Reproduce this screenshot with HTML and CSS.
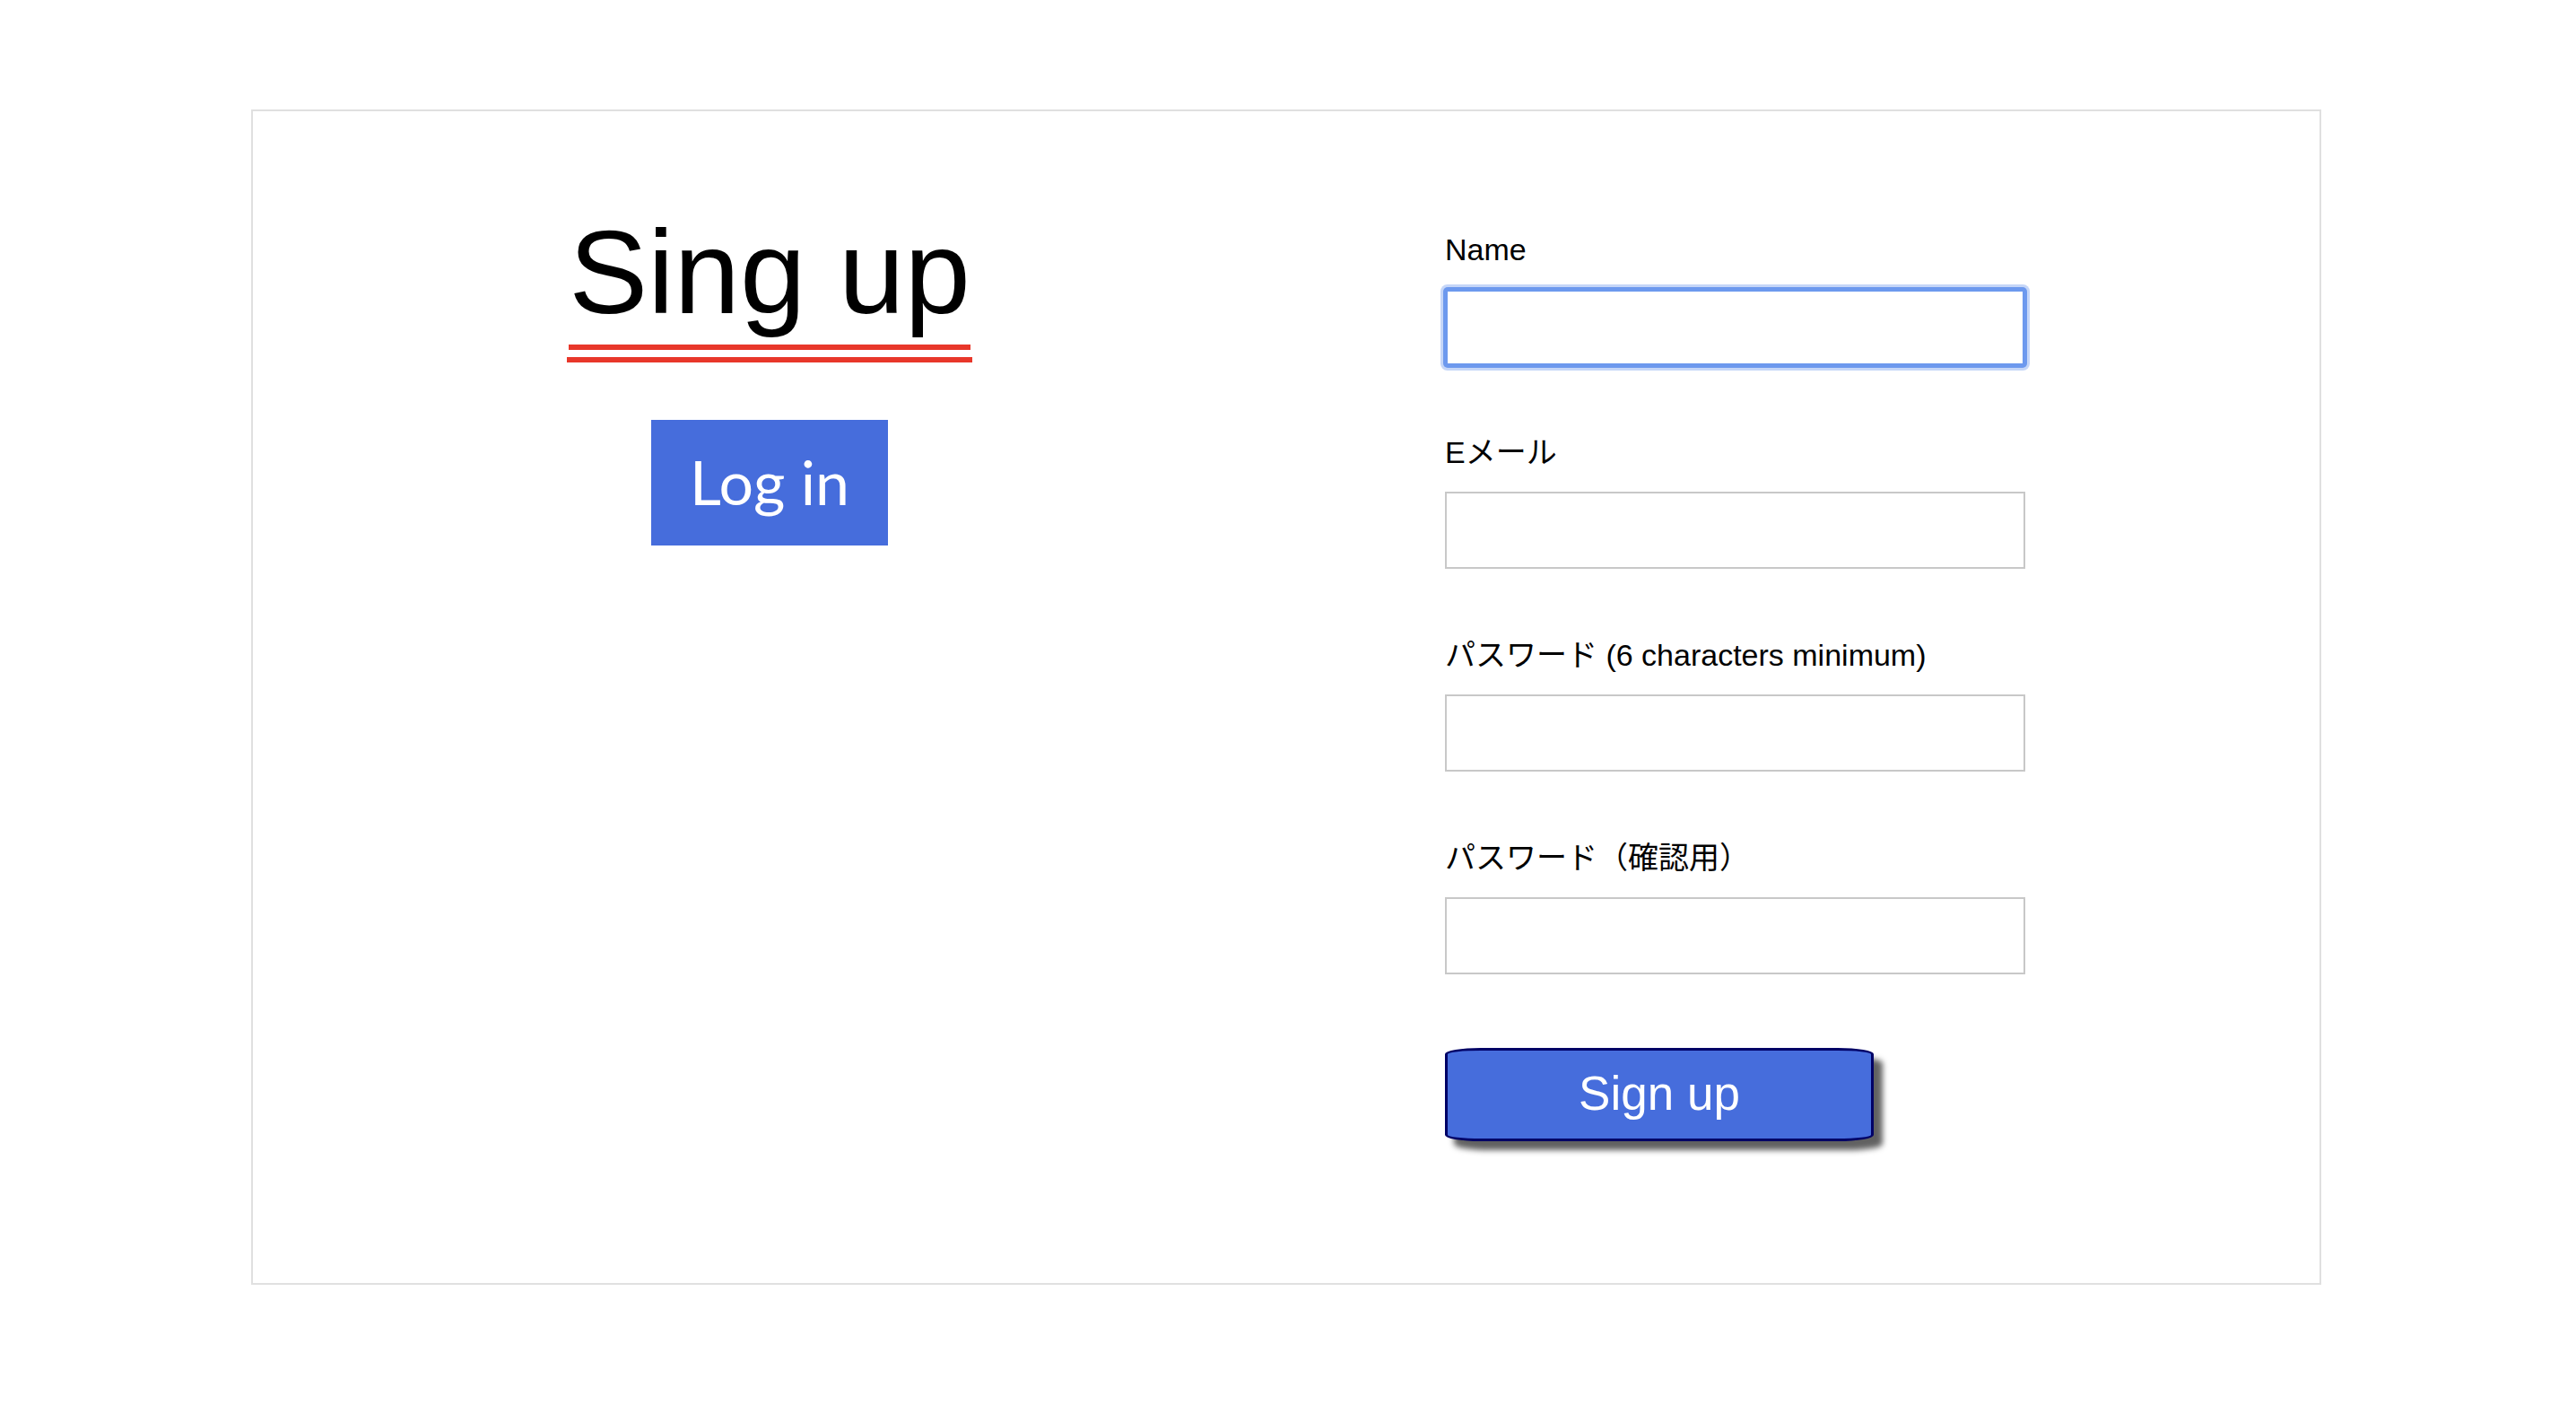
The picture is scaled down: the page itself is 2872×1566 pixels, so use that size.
FILE: index.html
```html
<!DOCTYPE html>
<html lang="ja">
<head>
<meta charset="utf-8">
<title>Sign up</title>
<link rel="stylesheet" href="styles.css">
</head>
<body>
<div class="card">
  <div class="left">
    <h1 class="title">Sing up</h1>
    <a class="login-btn" href="#">Log in</a>
  </div>
  <div class="right">
    <form class="form">
      <div class="field">
        <label class="label" for="name">Name</label>
        <input class="input input-focus" id="name" type="text">
      </div>
      <div class="field">
        <label class="label" for="email">Eメール</label>
        <input class="input" id="email" type="email">
      </div>
      <div class="field">
        <label class="label" for="pw">パスワード (6 characters minimum)</label>
        <input class="input" id="pw" type="password">
      </div>
      <div class="field">
        <label class="label" for="pw2">パスワード（確認用）</label>
        <input class="input" id="pw2" type="password">
      </div>
      <button class="signup-btn" type="button">Sign up</button>
    </form>
  </div>
</div>
</body>
</html>
```
FILE: styles.css
```css
html, body {
  margin: 0;
  padding: 0;
  background: #ffffff;
}

body {
  font-family: "Liberation Sans", "Noto Sans CJK JP", sans-serif;
  color: #000;
}

.card {
  box-sizing: border-box;
  width: 2308px;
  height: 1310px;
  margin: 122px 0 0 280px;
  border: 2px solid #e0e0e0;
  display: flex;
}

.left {
  width: 1152px;
  flex: none;
  display: flex;
  flex-direction: column;
  align-items: center;
  padding-top: 105px;
}

.title {
  display: flex;
  flex-direction: column;
  margin: 0;
  padding: 0 2px 8px;
  font-family: "Liberation Sans", sans-serif;
  font-weight: normal;
  font-size: 132px;
  line-height: 150px;
  color: #000;
  border-bottom: 6px solid #e8372a;
}

.title::after {
  content: "";
  display: block;
  height: 6px;
  margin-top: 5px;
  background: #e8372a;
}

.login-btn {
  margin-top: 64px;
  width: 264px;
  height: 140px;
  display: flex;
  align-items: center;
  justify-content: center;
  background: #466ddc;
  color: #fff;
  text-decoration: none;
  font-family: "Lato", sans-serif;
  font-size: 68px;
  padding-bottom: 4px;
  box-sizing: border-box;
}

.right {
  flex: 1;
  padding: 134px 0 0 177px;
}

.form {
  display: flex;
  flex-direction: column;
  align-items: flex-start;
}

.field {
  display: flex;
  flex-direction: column;
  margin-bottom: 76px;
}

.label {
  font-size: 34px;
  line-height: 40px;
  margin-bottom: 24px;
  color: #000;
}

.input {
  box-sizing: border-box;
  width: 647px;
  height: 86px;
  margin: 0;
  border: 2px solid #c8c8c8;
  background: #fff;
  outline: none;
}

.input-focus {
  border: 3px solid #6d99ee;
  border-radius: 3px;
  box-shadow: 0 0 0 2px #6d99ee, 0 0 0 5px rgba(109, 153, 238, 0.4);
}

.signup-btn {
  margin-top: 6px;
  width: 478px;
  height: 104px;
  box-sizing: border-box;
  border: 3px solid #000066;
  border-radius: 40px / 7px;
  background: #466ddc;
  color: #fff;
  font-family: "Liberation Sans", sans-serif;
  font-size: 53px;
  padding: 0 0 4px;
  box-shadow: 10px 10px 6px rgba(0, 0, 0, 0.62);
  cursor: pointer;
}
```
